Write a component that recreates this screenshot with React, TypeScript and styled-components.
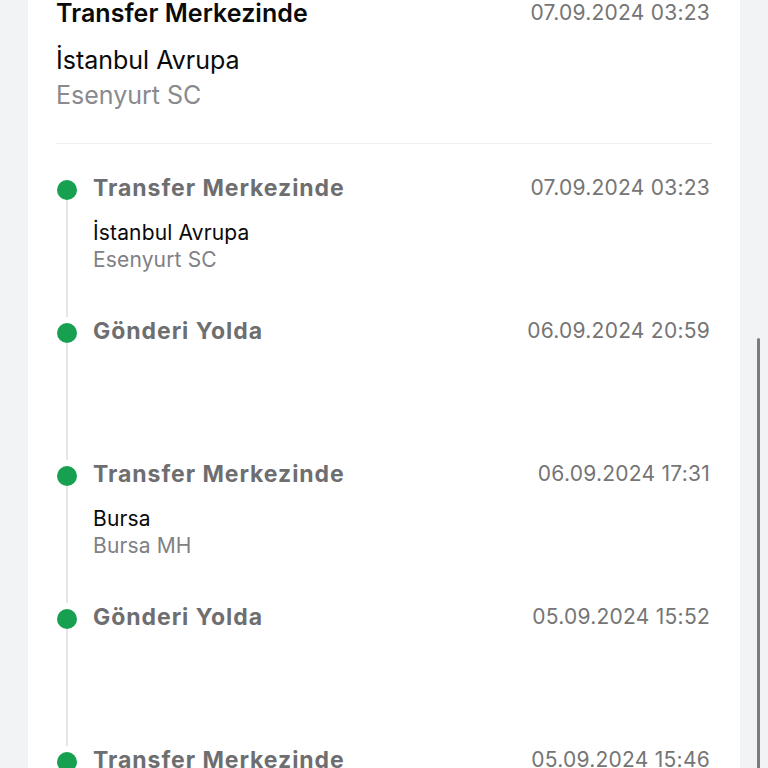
import * as React from "react";
import styled, { createGlobalStyle } from "styled-components";

// // // //

const GlobalStyle = createGlobalStyle`
    html, body {
        margin: 0;
        padding: 0;
        background: #f2f3f5;
        font-family: Inter, "Noto Sans", "Liberation Sans", sans-serif;
        -webkit-font-smoothing: antialiased;
    }
`;

interface TrackingEvent {
    id: number;
    status: string;
    date: string;
    city?: string;
    branch?: string;
}

const EVENTS: TrackingEvent[] = [
    { id: 1, status: "Transfer Merkezinde", date: "07.09.2024 03:23", city: "İstanbul Avrupa", branch: "Esenyurt SC" },
    { id: 2, status: "Gönderi Yolda", date: "06.09.2024 20:59" },
    { id: 3, status: "Transfer Merkezinde", date: "06.09.2024 17:31", city: "Bursa", branch: "Bursa MH" },
    { id: 4, status: "Gönderi Yolda", date: "05.09.2024 15:52" },
    { id: 5, status: "Transfer Merkezinde", date: "05.09.2024 15:46" },
];

const Viewport = styled.div`
    position: relative;
    height: 768px;
    overflow: hidden;
`;

const Card = styled.div`
    margin: 0 28px;
    padding: 0 28px;
    background: #ffffff;
    min-height: 100%;
`;

const Header = styled.div`
    display: flex;
    justify-content: space-between;
    align-items: center;
    margin-top: -1px;
`;

const HeaderTitle = styled.div`
    font-size: 25px;
    line-height: 28px;
    font-weight: 600;
    color: #0a0a0a;
    letter-spacing: 0.05px;
`;

const DateText = styled.div`
    font-size: 21px;
    line-height: 28px;
    color: #757575;
    letter-spacing: 0.25px;
    padding-right: 2px;
`;

const HeaderLocation = styled.div`
    margin-top: 16px;
`;

const HeaderLine = styled.div<{ $muted?: boolean }>`
    font-size: 25px;
    line-height: 35px;
    color: ${p => (p.$muted ? "#8a8a8e" : "#0a0a0a")};
`;

const Divider = styled.hr`
    margin: 30px 0 0;
    border: 0;
    border-top: 1px solid #f0f0f2;
`;

const Timeline = styled.ul`
    list-style: none;
    margin: 0;
    padding: 30px 0 0;
`;

const Item = styled.li`
    display: grid;
    grid-template-columns: 22px 1fr;
    column-gap: 15px;
    height: 143px;
`;

const Rail = styled.div`
    display: flex;
    flex-direction: column;
    align-items: center;
`;

const Dot = styled.span`
    width: 20px;
    height: 20px;
    margin-top: 6px;
    border-radius: 50%;
    background: #16a050;
    flex: none;
`;

const Line = styled.span`
    flex: 1;
    width: 2px;
    background: #e6e6e8;
`;

const Body = styled.div`
    display: flex;
    flex-direction: column;
`;

const ItemHead = styled.div`
    display: flex;
    justify-content: space-between;
    align-items: center;
`;

const ItemTitle = styled.div`
    font-size: 23px;
    line-height: 28px;
    font-weight: 700;
    color: #6e6e70;
    letter-spacing: 0.95px;
`;

const Places = styled.div`
    margin-top: 17px;
`;

const PlaceLine = styled.div<{ $muted?: boolean }>`
    font-size: 21px;
    line-height: 27px;
    letter-spacing: 0.15px;
    color: ${p => (p.$muted ? "#808085" : "#0a0a0a")};
`;

const Scrollbar = styled.div`
    position: absolute;
    right: 8px;
    top: 338px;
    bottom: -20px;
    width: 3px;
    border-radius: 2px;
    background: #7c7c7c;
`;

function TimelineItem(props: { event: TrackingEvent }) {
    const { event } = props;
    return (
        <Item>
            <Rail>
                <Dot />
                <Line />
            </Rail>
            <Body>
                <ItemHead>
                    <ItemTitle>{event.status}</ItemTitle>
                    <DateText>{event.date}</DateText>
                </ItemHead>
                {event.city && (
                    <Places>
                        <PlaceLine>{event.city}</PlaceLine>
                        <PlaceLine $muted>{event.branch}</PlaceLine>
                    </Places>
                )}
            </Body>
        </Item>
    );
}

export default function App() {
    return (
        <Viewport>
            <GlobalStyle />
            <Card>
                <Header>
                    <HeaderTitle>Transfer Merkezinde</HeaderTitle>
                    <DateText>07.09.2024 03:23</DateText>
                </Header>
                <HeaderLocation>
                    <HeaderLine>İstanbul Avrupa</HeaderLine>
                    <HeaderLine $muted>Esenyurt SC</HeaderLine>
                </HeaderLocation>
                <Divider />
                <Timeline>
                    {EVENTS.map(e => (
                        <TimelineItem key={e.id} event={e} />
                    ))}
                </Timeline>
            </Card>
            <Scrollbar />
        </Viewport>
    );
}
